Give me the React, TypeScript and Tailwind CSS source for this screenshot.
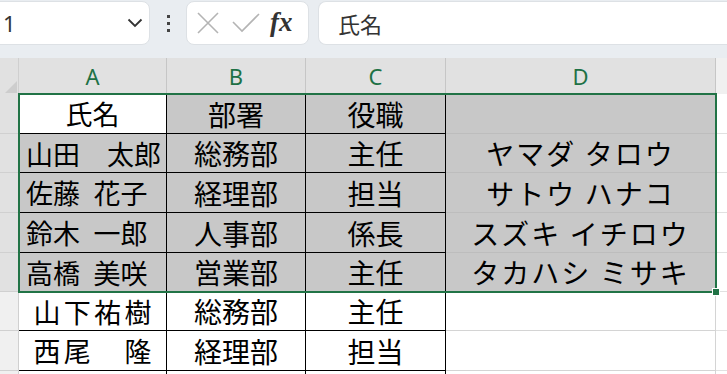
const CJK = { fontFamily: '"Noto Sans CJK JP", "Noto Sans", sans-serif' };

type Cell = { text: string; align: "center" | "left" | "dist"; fill: boolean };

const rows: { h: number; sel: boolean; cells: Cell[]; kana: string }[] = [
  {
    h: 40,
    sel: true,
    cells: [
      { text: "氏名", align: "center", fill: false },
      { text: "部署", align: "center", fill: true },
      { text: "役職", align: "center", fill: true },
    ],
    kana: "",
  },
  {
    h: 39,
    sel: true,
    cells: [
      { text: "山田　太郎", align: "left", fill: true },
      { text: "総務部", align: "center", fill: true },
      { text: "主任", align: "center", fill: true },
    ],
    kana: "ヤマダ タロウ",
  },
  {
    h: 40,
    sel: true,
    cells: [
      { text: "佐藤\u2002花子", align: "left", fill: true },
      { text: "経理部", align: "center", fill: true },
      { text: "担当", align: "center", fill: true },
    ],
    kana: "サトウ ハナコ",
  },
  {
    h: 40,
    sel: true,
    cells: [
      { text: "鈴木\u2002一郎", align: "left", fill: true },
      { text: "人事部", align: "center", fill: true },
      { text: "係長", align: "center", fill: true },
    ],
    kana: "スズキ イチロウ",
  },
  {
    h: 39,
    sel: true,
    cells: [
      { text: "高橋\u2002美咲", align: "left", fill: true },
      { text: "営業部", align: "center", fill: true },
      { text: "主任", align: "center", fill: true },
    ],
    kana: "タカハシ ミサキ",
  },
  {
    h: 39,
    sel: false,
    cells: [
      { text: "山下祐樹", align: "dist", fill: false },
      { text: "総務部", align: "center", fill: false },
      { text: "主任", align: "center", fill: false },
    ],
    kana: "",
  },
  {
    h: 40,
    sel: false,
    cells: [
      { text: "西尾　隆", align: "dist", fill: false },
      { text: "経理部", align: "center", fill: false },
      { text: "担当", align: "center", fill: false },
    ],
    kana: "",
  },
  { h: 30, sel: false, cells: [], kana: "" },
];

const colWidths = ["w-[148px]", "w-[139px]", "w-[140px]"];

function DataCell({ cell, w, col }: { cell?: Cell; w: string; col: number }) {
  if (!cell) {
    return <div className={`${w} shrink-0 border-r border-b border-black bg-white`} />;
  }
  const bg = cell.fill ? "bg-[#c8c8c8]" : "bg-white";
  const size = col === 0 ? "text-[27px]" : "text-[28px]";
  if (cell.align === "dist") {
    return (
      <div
        className={`${w} ${size} shrink-0 flex items-center justify-between px-[14px] border-r border-b border-black ${bg}`}
      >
        {Array.from(cell.text).map((ch, i) => (
          <span key={i} className="w-[28px] text-center">
            {ch === "　" ? "\u00a0" : ch}
          </span>
        ))}
      </div>
    );
  }
  return (
    <div
      className={`${w} ${size} shrink-0 flex items-center border-r border-b border-black whitespace-pre ${bg} ${
        cell.align === "left" ? "justify-start pl-[7px]" : "justify-center"
      }`}
    >
      {cell.text}
    </div>
  );
}

export default function App() {
  return (
    <div className="w-[727px] h-[374px] overflow-hidden bg-white relative" style={CJK}>
      {/* toolbar */}
      <div className="h-[58px] bg-[#e9edf1] flex items-start pt-[1px]">
        <div className="ml-[-12px] w-[162px] h-[44px] bg-white rounded-[8px] border border-[#dde1e5] flex items-center justify-between pl-[14px] pr-[6px]">
          <span className="text-[22px] text-[#333] leading-none" style={{ fontFamily: '"Noto Sans", sans-serif' }}>
            1
          </span>
          <svg width="16" height="10" viewBox="0 0 16 10" fill="none">
            <path d="M1.5 1.5 L8 8 L14.5 1.5" stroke="#333" strokeWidth="1.8" />
          </svg>
        </div>
        <div className="w-[36px] h-[44px] flex flex-col items-center justify-center gap-[4px]">
          <span className="w-[3px] h-[3px] bg-[#444]" />
          <span className="w-[3px] h-[3px] bg-[#444]" />
          <span className="w-[3px] h-[3px] bg-[#444]" />
        </div>
        <div className="w-[123px] h-[44px] bg-white rounded-[8px] border border-[#dde1e5] flex items-center pl-[10px] gap-[13px]">
          <svg width="22" height="22" viewBox="0 0 22 22" fill="none">
            <path d="M1 1 L21 21 M21 1 L1 21" stroke="#b4b4b4" strokeWidth="1.6" />
          </svg>
          <svg width="28" height="20" viewBox="0 0 28 20" fill="none">
            <path d="M1 9 L10 18 L27 1" stroke="#b4b4b4" strokeWidth="1.6" />
          </svg>
          <span
            className="text-[27px] italic font-bold text-[#333] leading-none ml-[-3px] mb-[2px]"
            style={{ fontFamily: '"Liberation Serif", "DejaVu Serif", serif' }}
          >
            fx
          </span>
        </div>
        <div className="ml-[9px] flex-1 h-[44px] bg-white rounded-l-[8px] border border-r-0 border-[#dde1e5] flex items-center pl-[19px]">
          <span className="text-[22px] text-[#333] leading-none">氏名</span>
        </div>
      </div>

      {/* column headers */}
      <div className="flex h-[36px]" style={{ fontFamily: '"Noto Sans", sans-serif' }}>
        <div className="w-[19px] shrink-0 bg-[#e1e1e1] border-r border-[#cfcfcf] flex items-end justify-end">
          <svg width="14" height="14" viewBox="0 0 14 14">
            <path d="M13 1 L13 13 L1 13 Z" fill="#cdcdcd" />
          </svg>
        </div>
        {["A", "B", "C"].map((c, i) => (
          <div
            key={c}
            className={`${colWidths[i]} shrink-0 bg-[#e1e1e1] border-r border-[#c6c6c6] flex items-center justify-center text-[22px] text-[#1e7145]`}
          >
            {c}
          </div>
        ))}
        <div className="w-[270px] shrink-0 bg-[#e1e1e1] border-r border-[#c6c6c6] flex items-center justify-center text-[22px] text-[#1e7145]">
          D
        </div>
        <div className="flex-1 bg-[#f0f0f0]" />
      </div>

      {/* rows */}
      <div className="text-black leading-none">
        {rows.map((r, ri) => (
          <div key={ri} className="flex" style={{ height: r.h }}>
            <div
              className={`w-[19px] shrink-0 border-r border-b border-[#d0d0d0] ${
                r.sel ? "bg-[#e1e1e1]" : "bg-[#f0f0f0]"
              }`}
            />
            {colWidths.map((w, ci) => (
              <DataCell key={ci} w={w} col={ci} cell={r.cells[ci]} />
            ))}
            <div
              className={`w-[270px] shrink-0 flex items-center justify-center border-r whitespace-pre text-[28px] tracking-[2px] ${
                r.sel ? "bg-[#c8c8c8] border-[#bdbdbd] border-b" : "bg-white border-[#d4d4d4] border-b"
              }`}
            >
              {r.kana}
            </div>
            <div className="flex-1 bg-white border-b border-[#e1e1e1]" />
          </div>
        ))}
      </div>

      {/* selection */}
      <div className="absolute left-[18px] top-[93px] w-[699px] h-[200px] border-2 border-[#217346] pointer-events-none" />
      <div className="absolute left-[712px] top-[288px] w-[8px] h-[8px] bg-[#217346] border border-white" />
    </div>
  );
}
